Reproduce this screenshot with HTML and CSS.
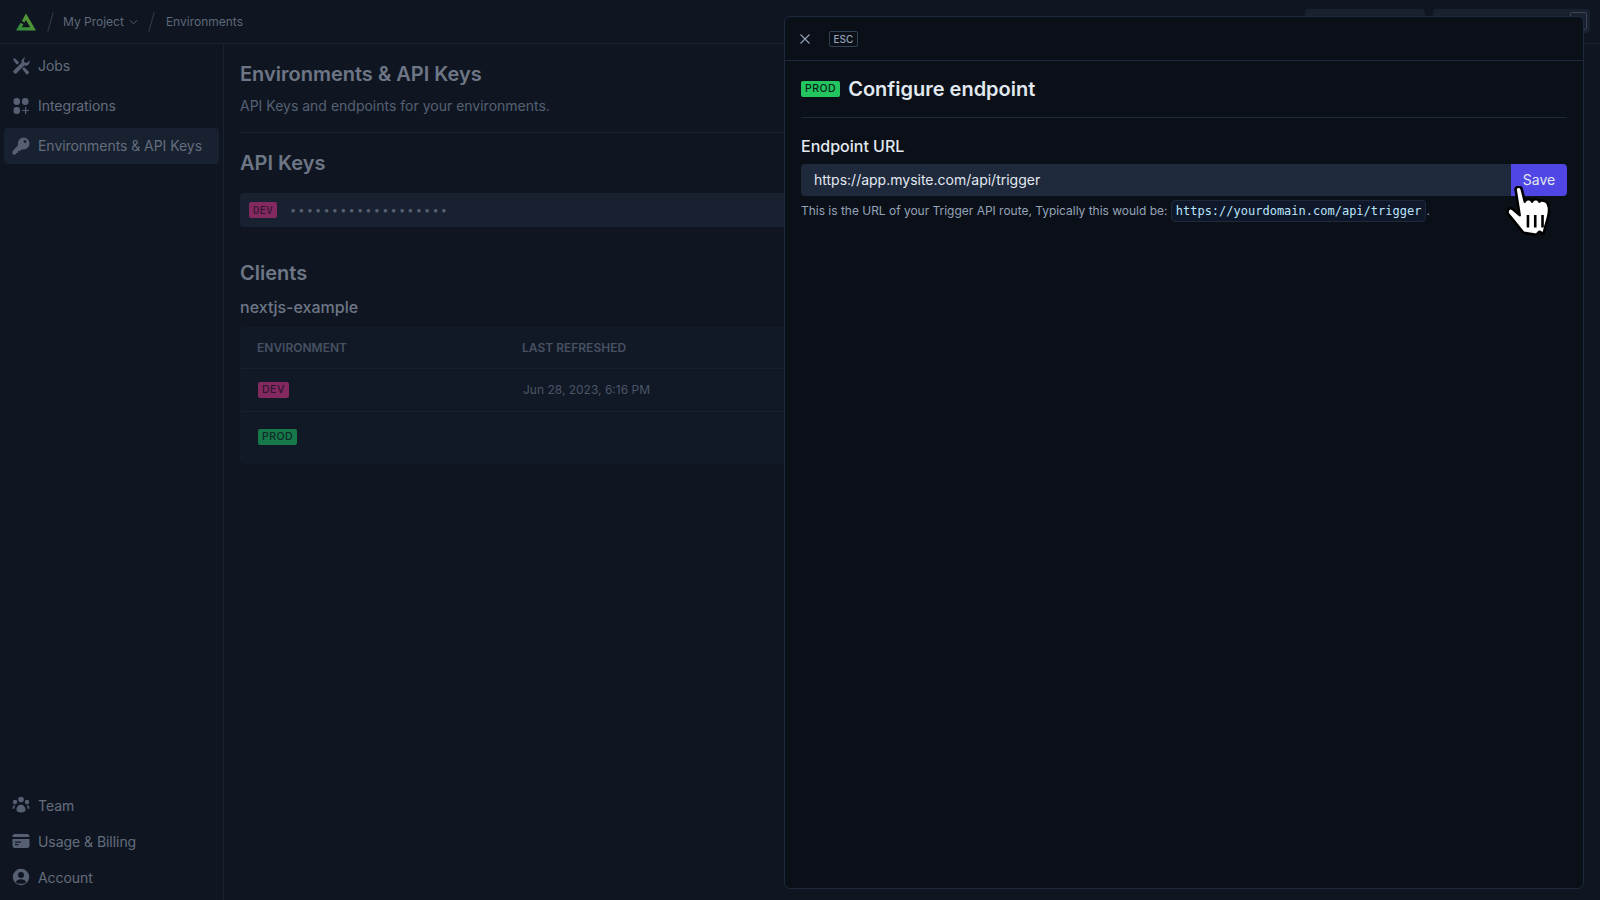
FILE: index.html
```html
<!DOCTYPE html>
<html lang="en">
<head>
    <meta charset="UTF-8">
    <title>Environments &amp; API Keys</title>
    <link rel="stylesheet" href="styles.css">
</head>
<body>
    <div class="app">
        <header class="topbar">
            <svg class="logo" viewBox="0 0 20 18" width="20" height="18">
                <defs>
                    <linearGradient id="logoGrad" x1="0" y1="1" x2="1" y2="0">
                        <stop offset="0" stop-color="#2a8a40"/>
                        <stop offset="1" stop-color="#6f9a2e"/>
                    </linearGradient>
                </defs>
                <path fill="url(#logoGrad)" fill-rule="evenodd" d="M10 0.500L20 17.500H0L4.600 9.700L7.400 11.400L5.700 14.200H14.200L10 7L8.400 9.600L5.800 7.900Z"/>
            </svg>
            <span class="slash"></span>
            <span class="crumb">My Project</span>
            <svg class="chevron" viewBox="0 0 10 6" width="9" height="6"><path d="M1 1l4 4 4-4" fill="none" stroke="#566072" stroke-width="1"/></svg>
            <span class="slash slash-2"></span>
            <span class="crumb">Environments</span>
            <div class="top-actions">
                <div class="top-btn top-btn-a"></div>
                <div class="top-btn top-btn-b"><span class="top-kbd"></span></div>
            </div>
        </header>

        <div class="body-row">
            <nav class="sidebar">
                <div class="nav-group">
                    <a class="nav-item">
                        <svg class="nav-icon" viewBox="0 0 18 18"><path d="M13.6 0.6a4 4 0 0 0-4 5.1L2.2 13a2 2 0 1 0 2.8 2.8l7.3-7.4a4 4 0 0 0 5.1-5l-2.6 2.5-2.5-.6-.6-2.5zM1 2.4L2.6 1l4.6 4.5-1.7 1.7H4.3zM10.200 11.700l1.800-1.800 4.600 4.500a1.800 1.800 0 0 1-2.500 2.500z"/></svg>
                        <span>Jobs</span>
                    </a>
                    <a class="nav-item">
                        <svg class="nav-icon" viewBox="0 0 18 18"><rect x="1.500" y="1" width="6.500" height="7" rx="3"/><rect x="10" y="1" width="6.500" height="7" rx="3"/><rect x="1.500" y="10" width="6.500" height="7" rx="3"/><path d="M13 10h1.200v2.900H17v1.200h-2.800V17H13v-2.900h-2.800v-1.200H13z"/></svg>
                        <span>Integrations</span>
                    </a>
                    <a class="nav-item nav-item-active">
                        <svg class="nav-icon" viewBox="0 0 18 18"><path fill-rule="evenodd" d="M11.500 0.500a6 6 0 0 1 0 12c-.6 0-1.200-.1-1.700-.3L8 14H6v2H4v1.500H0.500v-3.300L6 8.200a6 6 0 0 1 5.500-7.700zM13 3a1.500 1.500 0 1 0 0 3 1.500 1.500 0 0 0 0-3z"/></svg>
                        <span>Environments &amp; API Keys</span>
                    </a>
                </div>
                <div class="nav-group">
                    <a class="nav-item nav-item-low">
                        <svg class="nav-icon" viewBox="0 0 18 18"><circle cx="9" cy="3.500" r="2.800"/><circle cx="3" cy="6" r="2.200"/><circle cx="15" cy="6" r="2.200"/><path d="M4.500 14c0-3.200 2-5.200 4.500-5.200s4.500 2 4.500 5.200c0 1.600-1.500 2.500-4.500 2.500S4.500 15.600 4.500 14zM0.500 12.500c0-2 1-3.500 2.700-3.700-.5 1-.8 2.200-.8 3.600-.800.300-1.900.400-1.900.1zM17.500 12.500c0-2-1-3.500-2.700-3.700.5 1 .8 2.200.8 3.600.8.300 1.900.4 1.900.1z"/></svg>
                        <span>Team</span>
                    </a>
                    <a class="nav-item nav-item-low">
                        <svg class="nav-icon" viewBox="0 0 18 18"><path fill-rule="evenodd" d="M2.500 2h13A2.200 2.200 0 0 1 17.500 4.200V5H.5v-.8A2.200 2.200 0 0 1 2.500 2zM.5 7h17v6.800A2.200 2.200 0 0 1 15.500 16h-13A2.200 2.200 0 0 1 .5 13.800zM3 9.500v1.200h6V9.500zM3 12v1.200h3.500V12z"/></svg>
                        <span>Usage &amp; Billing</span>
                    </a>
                    <a class="nav-item nav-item-low">
                        <svg class="nav-icon" viewBox="0 0 18 18"><path fill-rule="evenodd" d="M9 0.800a8.200 8.200 0 1 1 0 16.400A8.200 8.200 0 0 1 9 .8zM9 4a3 3 0 1 0 0 6 3 3 0 0 0 0-6zM3.800 14.300A6.800 6.800 0 0 0 9 15.800a6.800 6.800 0 0 0 5.200-1.500C13.600 12.500 11.500 11.300 9 11.300s-4.600 1.200-5.200 3z"/></svg>
                        <span>Account</span>
                    </a>
                </div>
            </nav>

            <main class="content">
                <h1 class="page-title">Environments &amp; API Keys</h1>
                <p class="page-sub">API Keys and endpoints for your environments.</p>
                <div class="page-rule"></div>

                <h2 class="section-title">API Keys</h2>
                <div class="key-row">
                    <span class="badge badge-dev badge-mono">DEV</span>
                    <span class="key-dots">&bull;&bull;&bull;&bull;&bull;&bull;&bull;&bull;&bull;&bull;&bull;&bull;&bull;&bull;&bull;&bull;&bull;&bull;&bull;</span>
                </div>

                <h2 class="section-title clients-title">Clients</h2>
                <h3 class="client-name">nextjs-example</h3>
                <table class="client-table">
                    <thead>
                        <tr>
                            <th class="col-env">Environment</th>
                            <th>Last refreshed</th>
                        </tr>
                    </thead>
                    <tbody>
                        <tr>
                            <td><span class="badge badge-dev">DEV</span></td>
                            <td class="cell-date">Jun 28, 2023, 6:16 PM</td>
                        </tr>
                        <tr>
                            <td><span class="badge badge-prod">PROD</span></td>
                            <td></td>
                        </tr>
                    </tbody>
                </table>
            </main>
        </div>
    </div>

    <aside class="panel">
        <div class="panel-top">
            <svg class="close-x" viewBox="0 0 10 10" width="10" height="10"><path d="M.5.5l9 9M9.500.5l-9 9" stroke="#94a3b8" stroke-width="1.100" fill="none"/></svg>
            <span class="esc-key">ESC</span>
        </div>
        <div class="panel-body">
            <div class="panel-heading">
                <span class="badge badge-prod-bright">PROD</span>
                <h2 class="panel-title">Configure endpoint</h2>
            </div>
            <label class="field-label">Endpoint URL</label>
            <div class="field-row">
                <div class="field-input">https://app.mysite.com/api/trigger</div>
                <button class="save-btn">Save</button>
            </div>
            <p class="field-hint">This is the URL of your Trigger API route, Typically this would be: <code class="hint-code">https://yourdomain.com/api/trigger</code>.</p>
        </div>
    </aside>

    <svg class="hand-cursor" viewBox="0 0 44 50" width="46" height="52">
        <path d="M9 3C10 0 14 0 15 3L18 15C19 12 24 12 25 15C26 12 31 12 32 15C33 13 39 14 40 17L41 20C42 24 40 32 38 38L36 46L32 44L29 47L17 45C13 41 9 35 2 27C0 24 3 20 6 22L13 28Z" fill="#fff" stroke="#000" stroke-width="2.500" stroke-linejoin="round"/>
        <path d="M21 28v12M28 28v12M35 28v12" stroke="#000" stroke-width="2.500" fill="none"/>
    </svg>
</body>
</html>
```

FILE: styles.css
```css
* {
    box-sizing: border-box;
}

html, body {
    margin: 0;
    padding: 0;
    height: 100%;
    overflow: hidden;
}

body {
    background-color: #0f1622;
    color: #6b7484;
    font-family: Inter, "Noto Sans", sans-serif;
}

.app {
    display: flex;
    flex-direction: column;
    height: 900px;
}

/* top bar */
.topbar {
    display: flex;
    align-items: center;
    height: 44px;
    padding-left: 16px;
    border-bottom: 1px solid #1a2231;
    flex-shrink: 0;
}

.logo {
    margin-right: 14px;
}

.slash {
    width: 1px;
    height: 20px;
    background-color: #333c4c;
    transform: rotate(16deg);
    margin-right: 12px;
}

.slash-2 {
    margin-left: 13px;
    margin-right: 14px;
}

.crumb {
    font-size: 12px;
    color: #5e6878;
}

.chevron {
    margin-left: 5px;
}

.top-actions {
    display: flex;
    gap: 8px;
    margin-left: auto;
    margin-right: 10px;
    align-self: flex-start;
    margin-top: 9px;
}

.top-btn {
    height: 24px;
    background-color: #182130;
    border-radius: 4px;
}

.top-btn-a {
    width: 120px;
}

.top-btn-b {
    width: 157px;
    display: flex;
    justify-content: flex-end;
    align-items: center;
    padding-right: 3px;
}

.top-kbd {
    width: 17px;
    height: 18px;
    border: 1px solid #3a4454;
    border-radius: 2px;
}

.body-row {
    display: flex;
    flex: 1;
    min-height: 0;
}

/* sidebar */
.sidebar {
    width: 224px;
    flex-shrink: 0;
    border-right: 1px solid #1a2231;
    display: flex;
    flex-direction: column;
    justify-content: space-between;
    padding: 0 4px 5px;
}

.nav-group {
    display: flex;
    flex-direction: column;
}

.nav-item {
    display: flex;
    align-items: center;
    gap: 8px;
    height: 36px;
    margin-top: 4px;
    padding-left: 8px;
    padding-bottom: 1px;
    font-size: 14px;
    letter-spacing: -0.05px;
    color: #646d7d;
    border-radius: 4px;
}

.nav-item-active {
    background-color: #182130;
}

.nav-item-low {
    height: 36px;
    margin-top: 0;
    padding-bottom: 0;
}

.nav-icon {
    width: 18px;
    height: 18px;
    fill: #566072;
    flex-shrink: 0;
}

/* main column */
.content {
    flex: 1;
    padding: 16px 16px 0;
    min-width: 0;
}

.page-title {
    margin: 0;
    font-size: 20px;
    line-height: 28px;
    font-weight: 600;
    color: #6e7686;
}

.page-sub {
    margin: 8px 0 0;
    font-size: 14px;
    line-height: 20px;
    color: #566072;
}

.page-rule {
    height: 1px;
    margin-top: 16px;
    background-color: #1a2231;
}

.section-title {
    margin: 16px 0 0;
    font-size: 20px;
    line-height: 28px;
    font-weight: 600;
    color: #6e7686;
}

.key-row {
    display: flex;
    align-items: center;
    height: 34px;
    margin-top: 16px;
    padding-left: 9px;
    background-color: #182130;
    border-radius: 4px;
}

.key-dots {
    margin-left: 13px;
    font-size: 11px;
    letter-spacing: 2.200px;
    color: #566072;
}

.clients-title {
    margin-top: 32px;
}

.client-name {
    margin: 8px 0 0;
    font-size: 16px;
    line-height: 24px;
    font-weight: 500;
    color: #6e7686;
}

.client-table {
    width: 100%;
    margin-top: 8px;
    border-collapse: separate;
    border-spacing: 0;
    background-color: #111926;
    border: 1px solid #131b28;
    border-radius: 4px;
}

.client-table th {
    height: 41px;
    padding: 0 0 1px 16px;
    text-align: left;
    font-size: 12px;
    font-weight: 600;
    text-transform: uppercase;
    color: #475162;
    border-bottom: 1px solid #162030;
}

.client-table .col-env {
    width: 265px;
}

.client-table td {
    padding: 0 0 0 17px;
    height: 43px;
    font-size: 12px;
    color: #4b5566;
}

.client-table .cell-date {
    padding-bottom: 1px;
}

.client-table tbody tr:first-child td {
    border-bottom: 1px solid #162030;
}

.client-table tbody tr:last-child td {
    height: 50px;
}

.badge {
    display: inline-block;
    height: 16px;
    padding: 0 4px;
    font-size: 10.5px;
    line-height: 16px;
    font-weight: 500;
    letter-spacing: 0.5px;
    border-radius: 2px;
    vertical-align: middle;
}

.badge-dev {
    background-color: #84295f;
    color: #2a1630;
}

.badge-mono {
    font-family: "DejaVu Sans Mono", monospace;
    padding: 0 4px;
    letter-spacing: 0.3px;
}

.badge-prod {
    background-color: #17784a;
    color: #0d2a26;
}

.badge-prod-bright {
    background-color: #22c55e;
    color: #0b1f1a;
}

/* endpoint panel */
.panel {
    position: absolute;
    left: 784px;
    top: 16px;
    width: 800px;
    height: 873px;
    background-color: #0b1018;
    border: 1px solid #1e293b;
    border-radius: 6px;
}

.panel-top {
    display: flex;
    align-items: center;
    height: 44px;
    padding-left: 15px;
    border-bottom: 1px solid #1e293b;
}

.esc-key {
    width: 29px;
    margin-left: 19px;
    height: 16px;
    text-align: center;
    line-height: 14px;
    font-size: 10px;
    font-weight: 500;
    color: #94a3b8;
    border: 1px solid #334155;
    border-radius: 2px;
}

.panel-body {
    padding: 0 16px;
}

.panel-heading {
    display: flex;
    align-items: center;
    gap: 8px;
    height: 57px;
    border-bottom: 1px solid #1e293b;
}

.panel-title {
    margin: 0;
    font-size: 20px;
    font-weight: 600;
    color: #e2e8f0;
}

.field-label {
    display: block;
    margin-top: 16px;
    font-size: 16px;
    line-height: 24px;
    font-weight: 500;
    color: #e2e8f0;
}

.field-row {
    display: flex;
    height: 32px;
    margin-top: 6px;
}

.field-input {
    flex: 1;
    padding-left: 13px;
    font-size: 14px;
    line-height: 32px;
    color: #e2e8f0;
    background-color: #1e293b;
    border-radius: 4px 0 0 4px;
}

.save-btn {
    width: 56px;
    border: none;
    padding: 0 0 1px;
    font-family: inherit;
    font-size: 14px;
    color: #e2e8f0;
    background-color: #4f46e5;
    border-radius: 0 4px 4px 0;
}

.field-hint {
    margin: 4px 0 0;
    font-size: 12px;
    letter-spacing: -0.02px;
    line-height: 22px;
    color: #94a3b8;
}

.hint-code {
    display: inline-block;
    height: 22px;
    padding: 0 4px;
    font-family: "DejaVu Sans Mono", monospace;
    font-size: 12px;
    line-height: 20px;
    letter-spacing: 0;
    color: #bae6fd;
    background-color: #0f172a;
    border: 1px solid #1e293b;
    border-radius: 4px;
}

.hand-cursor {
    position: absolute;
    left: 1506px;
    top: 186px;
}
```
